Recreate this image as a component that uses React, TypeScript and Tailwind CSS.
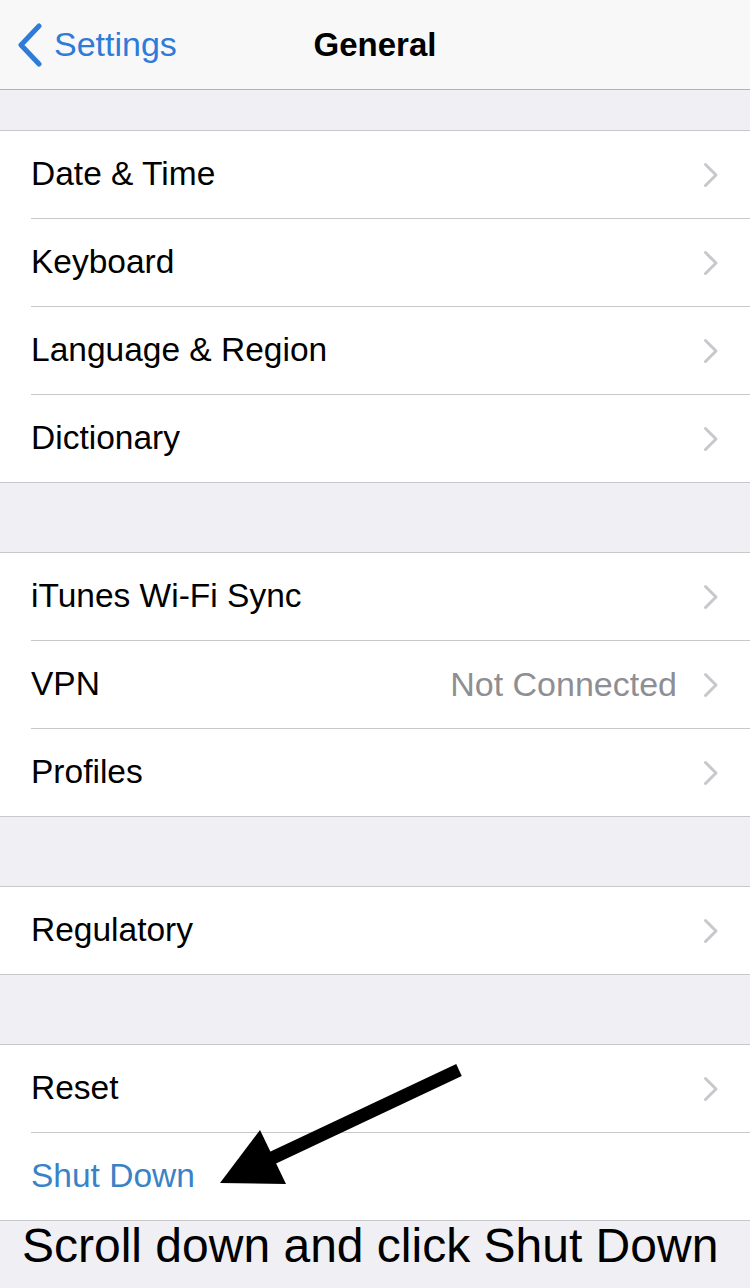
import React from 'react';

type Row = { label: string; detail?: string; link?: boolean; chevron?: boolean };

const groups: Row[][] = [
  [
    { label: 'Date & Time' },
    { label: 'Keyboard' },
    { label: 'Language & Region' },
    { label: 'Dictionary' },
  ],
  [
    { label: 'iTunes Wi-Fi Sync' },
    { label: 'VPN', detail: 'Not Connected' },
    { label: 'Profiles' },
  ],
  [{ label: 'Regulatory' }],
  [{ label: 'Reset' }, { label: 'Shut Down', link: true, chevron: false }],
];

const gaps = ['h-[69px]', 'h-[69px]', 'h-[69px]'];

const Chevron: React.FC = () => (
  <svg width="16" height="26" viewBox="0 0 16 26" className="shrink-0">
    <path d="M2.5 2.5 L13 13 L2.5 23.5" fill="none" stroke="#c7c7cc" strokeWidth="3" strokeLinecap="round" strokeLinejoin="round" />
  </svg>
);

const SettingsRow: React.FC<{ row: Row; last: boolean }> = ({ row, last }) => (
  <div className="flex h-[88px] items-stretch pl-[31px]">
    <div className={`flex flex-1 items-center pr-[31px] ${last ? 'h-[87px]' : 'h-[88px] border-b border-[#c8c7cc]'}`}>
      <span className={`flex-1 text-[33.5px] ${row.link ? 'text-[#3a82c6]' : 'text-black'}`}>{row.label}</span>
      {row.detail && <span className="mr-[26px] text-[34px] text-[#8e8e93]">{row.detail}</span>}
      {row.chevron !== false && <Chevron />}
    </div>
  </div>
);

export default function App() {
  return (
    <div className="relative h-[1288px] w-[750px] overflow-hidden bg-[#efeff4]" style={{ fontFamily: '"Liberation Sans", Arial, sans-serif' }}>
      {/* Nav bar */}
      <div className="relative flex h-[90px] items-center justify-center border-b border-[#b2b2b2] bg-[#f8f8f8]">
        <div className="absolute left-[16px] top-0 flex h-[89px] items-center gap-[10px]">
          <svg width="28" height="44" viewBox="0 0 28 44">
            <path d="M23 3 L5 22 L23 41" fill="none" stroke="#2f7bd8" strokeWidth="5" strokeLinecap="round" strokeLinejoin="round" />
          </svg>
          <span className="text-[34px] text-[#2f7bd8]">Settings</span>
        </div>
        <span className="text-[33px] font-bold text-black">General</span>
      </div>

      <div className="h-[40px]" />

      {groups.map((g, gi) => (
        <React.Fragment key={gi}>
          <div className="border-y border-[#c8c7cc] bg-white">
            {g.map((row, ri) => (
              <div key={ri} className={ri === g.length - 1 ? 'h-[87px]' : ''}>
                <SettingsRow row={row} last={ri === g.length - 1} />
              </div>
            ))}
          </div>
          {gi < gaps.length && <div className={gaps[gi]} />}
        </React.Fragment>
      ))}

      {/* Caption */}
      <div className="pl-[22px]">
        <span className="text-[48px] leading-[50px] text-black">Scroll down and click Shut Down</span>
      </div>

      {/* Annotation arrow */}
      <svg className="pointer-events-none absolute left-0 top-0" width="750" height="1288" viewBox="0 0 750 1288">
        <line x1="459" y1="1070" x2="268" y2="1160" stroke="#000" strokeWidth="13" />
        <polygon points="260,1130 220,1183 286,1184" fill="#000" />
      </svg>
    </div>
  );
}
